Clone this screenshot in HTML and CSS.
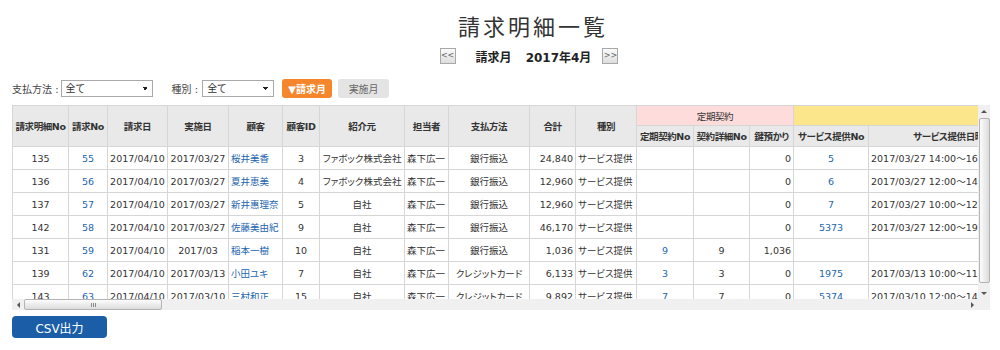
FILE: index.html
```html
<!DOCTYPE html>
<html lang="ja">
<head>
    <meta charset="UTF-8">
    <meta name="viewport" content="width=device-width, initial-scale=1.0">
    <title>請求明細一覧</title>
    <link rel="stylesheet" href="styles.css">
</head>
<body>
    <div class="page">
        <h1 class="page-title">請求明細一覧</h1>

        <div class="month-nav">
            <button class="nav-btn">&lt;&lt;</button>
            <span class="nav-label">請求月</span>
            <span class="nav-month">2017年4月</span>
            <button class="nav-btn next">&gt;&gt;</button>
        </div>

        <div class="filters">
            <label class="filter-label">支払方法 :</label>
            <select class="filter-select pay"><option>全て</option></select>
            <label class="filter-label kind-label">種別 :</label>
            <select class="filter-select kind"><option>全て</option></select>
            <button class="btn btn-active">▼請求月</button>
            <button class="btn">実施月</button>
        </div>

        <div class="grid-frame">
            <div class="grid">
                <table>
                    <colgroup>
                        <col class="w56"><col class="w39"><col class="w60"><col class="w61">
                        <col class="w54"><col class="w37"><col class="w85"><col class="w44">
                        <col class="w81"><col class="w46"><col class="w61"><col class="w57">
                        <col class="w56"><col class="w44"><col class="w75"><col class="w160">
                        <col class="w110"><col class="w50"><col class="w60"><col class="w70">
                        <col class="w60"><col>
                    </colgroup>
                    <thead>
                        <tr class="head-top">
                            <th rowspan="2">請求明細No</th>
                            <th rowspan="2">請求No</th>
                            <th rowspan="2">請求日</th>
                            <th rowspan="2">実施日</th>
                            <th rowspan="2">顧客</th>
                            <th rowspan="2">顧客ID</th>
                            <th rowspan="2">紹介元</th>
                            <th rowspan="2">担当者</th>
                            <th rowspan="2">支払方法</th>
                            <th rowspan="2">合計</th>
                            <th rowspan="2">種別</th>
                            <th colspan="3" class="group-contract">定期契約</th>
                            <th colspan="6" class="group-service">サービス提供</th>
                            <th rowspan="2">交通費</th>
                            <th rowspan="2">備考</th>
                        </tr>
                        <tr class="head-sub">
                            <th>定期契約No</th>
                            <th>契約詳細No</th>
                            <th>鍵預かり</th>
                            <th>サービス提供No</th>
                            <th>サービス提供日時</th>
                            <th>サービス内容</th>
                            <th>時間</th>
                            <th>単価</th>
                            <th>金額</th>
                        </tr>
                    </thead>
                    <tbody>
                        <tr>
                            <td class="c">135</td>
                            <td class="c"><a href="#">55</a></td>
                            <td class="c">2017/04/10</td>
                            <td class="c">2017/03/27</td>
                            <td><a href="#">桜井美香</a></td>
                            <td class="c">3</td>
                            <td class="c">ファボック株式会社</td>
                            <td>森下広一</td>
                            <td class="c">銀行振込</td>
                            <td class="r">24,840</td>
                            <td>サービス提供</td>
                            <td></td>
                            <td></td>
                            <td class="r">0</td>
                            <td class="c"><a href="#">5</a></td>
                            <td>2017/03/27 14:00～16:00</td>
                            <td>家事代行</td>
                            <td class="r">2.0</td>
                            <td class="r">11,500</td>
                            <td class="r">23,000</td>
                            <td class="r">0</td>
                            <td></td>
                        </tr>
                        <tr>
                            <td class="c">136</td>
                            <td class="c"><a href="#">56</a></td>
                            <td class="c">2017/04/10</td>
                            <td class="c">2017/03/27</td>
                            <td><a href="#">夏井恵美</a></td>
                            <td class="c">4</td>
                            <td class="c">ファボック株式会社</td>
                            <td>森下広一</td>
                            <td class="c">銀行振込</td>
                            <td class="r">12,960</td>
                            <td>サービス提供</td>
                            <td></td>
                            <td></td>
                            <td class="r">0</td>
                            <td class="c"><a href="#">6</a></td>
                            <td>2017/03/27 12:00～14:00</td>
                            <td>家事代行</td>
                            <td class="r">2.0</td>
                            <td class="r">6,000</td>
                            <td class="r">12,000</td>
                            <td class="r">0</td>
                            <td></td>
                        </tr>
                        <tr>
                            <td class="c">137</td>
                            <td class="c"><a href="#">57</a></td>
                            <td class="c">2017/04/10</td>
                            <td class="c">2017/03/27</td>
                            <td><a href="#">新井惠理奈</a></td>
                            <td class="c">5</td>
                            <td class="c">自社</td>
                            <td>森下広一</td>
                            <td class="c">銀行振込</td>
                            <td class="r">12,960</td>
                            <td>サービス提供</td>
                            <td></td>
                            <td></td>
                            <td class="r">0</td>
                            <td class="c"><a href="#">7</a></td>
                            <td>2017/03/27 10:00～12:00</td>
                            <td>家事代行</td>
                            <td class="r">2.0</td>
                            <td class="r">6,000</td>
                            <td class="r">12,000</td>
                            <td class="r">0</td>
                            <td></td>
                        </tr>
                        <tr>
                            <td class="c">142</td>
                            <td class="c"><a href="#">58</a></td>
                            <td class="c">2017/04/10</td>
                            <td class="c">2017/03/27</td>
                            <td><a href="#">佐藤美由紀</a></td>
                            <td class="c">9</td>
                            <td class="c">自社</td>
                            <td>森下広一</td>
                            <td class="c">銀行振込</td>
                            <td class="r">46,170</td>
                            <td>サービス提供</td>
                            <td></td>
                            <td></td>
                            <td class="r">0</td>
                            <td class="c"><a href="#">5373</a></td>
                            <td>2017/03/27 12:00～19:00</td>
                            <td>家事代行</td>
                            <td class="r">7.0</td>
                            <td class="r">6,100</td>
                            <td class="r">42,700</td>
                            <td class="r">0</td>
                            <td></td>
                        </tr>
                        <tr>
                            <td class="c">131</td>
                            <td class="c"><a href="#">59</a></td>
                            <td class="c">2017/04/10</td>
                            <td class="c">2017/03</td>
                            <td><a href="#">稲本一樹</a></td>
                            <td class="c">10</td>
                            <td class="c">自社</td>
                            <td>森下広一</td>
                            <td class="c">銀行振込</td>
                            <td class="r">1,036</td>
                            <td>サービス提供</td>
                            <td class="c"><a href="#">9</a></td>
                            <td class="c">9</td>
                            <td class="r">1,036</td>
                            <td></td>
                            <td></td>
                            <td></td>
                            <td></td>
                            <td></td>
                            <td></td>
                            <td></td>
                            <td></td>
                        </tr>
                        <tr>
                            <td class="c">139</td>
                            <td class="c"><a href="#">62</a></td>
                            <td class="c">2017/04/10</td>
                            <td class="c">2017/03/13</td>
                            <td><a href="#">小田ユキ</a></td>
                            <td class="c">7</td>
                            <td class="c">自社</td>
                            <td>森下広一</td>
                            <td class="c">クレジットカード</td>
                            <td class="r">6,133</td>
                            <td>サービス提供</td>
                            <td class="c"><a href="#">3</a></td>
                            <td class="c">3</td>
                            <td class="r">0</td>
                            <td class="c"><a href="#">1975</a></td>
                            <td>2017/03/13 10:00～11:00</td>
                            <td>家事代行</td>
                            <td class="r">1.0</td>
                            <td class="r">5,680</td>
                            <td class="r">5,680</td>
                            <td class="r">0</td>
                            <td></td>
                        </tr>
                        <tr>
                            <td class="c">143</td>
                            <td class="c"><a href="#">63</a></td>
                            <td class="c">2017/04/10</td>
                            <td class="c">2017/03/10</td>
                            <td><a href="#">三村和正</a></td>
                            <td class="c">15</td>
                            <td class="c">自社</td>
                            <td>森下広一</td>
                            <td class="c">クレジットカード</td>
                            <td class="r">9,892</td>
                            <td>サービス提供</td>
                            <td class="c"><a href="#">7</a></td>
                            <td class="c">7</td>
                            <td class="r">0</td>
                            <td class="c"><a href="#">5374</a></td>
                            <td>2017/03/10 12:00～14:00</td>
                            <td>家事代行</td>
                            <td class="r">2.0</td>
                            <td class="r">4,580</td>
                            <td class="r">9,160</td>
                            <td class="r">0</td>
                            <td></td>
                        </tr>
                    </tbody>
                </table>
            </div>

            <!-- スクロールバー -->
            <div class="vscroll">
                <span class="sb-btn"><span class="arrow up"></span></span>
                <span class="sb-track"><span class="sb-thumb"></span></span>
                <span class="sb-btn"><span class="arrow down"></span></span>
            </div>
            <div class="hscroll">
                <span class="sb-btn"><span class="arrow left"></span></span>
                <span class="sb-track"><span class="sb-thumb"></span></span>
                <span class="sb-btn"><span class="arrow right"></span></span>
            </div>
            <div class="sb-corner"></div>
        </div>

        <button class="btn-csv">CSV出力</button>
    </div>
</body>
</html>
```

FILE: styles.css
```css
body {
    margin: 0;
    font-family: "DejaVu Sans", "Noto Sans CJK JP", sans-serif;
    font-feature-settings: "palt";
    font-size: 9.5px;
    color: #333;
}

button,
select {
    font-family: inherit;
    font-feature-settings: inherit;
}

.page {
    padding: 0 10px 0 12px;
}

/* タイトル */
.page-title {
    margin: 10px 0 0;
    padding-left: 64px;
    text-align: center;
    font-family: "Noto Sans CJK JP", sans-serif;
    font-size: 22px;
    font-weight: normal;
    line-height: 30px;
    letter-spacing: 3px;
}

.month-nav {
    display: flex;
    justify-content: center;
    align-items: center;
    height: 16px;
    margin-top: 8px;
    padding-left: 56px;
    font-size: 12px;
    font-weight: bold;
    color: #222;
}

.nav-btn {
    width: 16px;
    height: 16px;
    padding: 0;
    border: 1px solid #a8a8a8;
    background: linear-gradient(#fbfbfb, #dedede);
    color: #666;
    font-size: 8px;
    font-weight: normal;
    line-height: 14px;
}

.nav-label {
    margin-left: 20px;
}

.nav-month {
    margin-left: 14px;
}

.nav-btn.next {
    margin-left: 11px;
}

/* 絞り込み */
.filters {
    display: flex;
    align-items: center;
    height: 19px;
    margin-top: 15px;
    font-size: 10px;
}

.filter-label {
    color: #444;
}

.kind-label {
    margin-left: 19px;
}

.filter-select {
    appearance: none;
    height: 17px;
    margin-left: 2px;
    padding: 0 4px;
    border: 1px solid #a9a9a9;
    border-radius: 0;
    font-size: 10px;
    color: #333;
    background-color: #fff;
    background-image: linear-gradient(45deg, transparent 50%, #222 50%), linear-gradient(135deg, #222 50%, transparent 50%);
    background-position: right 7px center, right 4px center;
    background-size: 3px 3px;
    background-repeat: no-repeat;
}

.filter-select.pay {
    width: 92px;
}

.filter-select.kind {
    width: 72px;
    margin-left: 4px;
    margin-right: 8px;
}

.btn {
    width: 51px;
    height: 19px;
    margin-right: 6px;
    padding: 0;
    border: 0;
    border-radius: 3px;
    background: #e4e4e4;
    color: #666;
    font-size: 10px;
}

.btn-active {
    width: 50px;
    background: #f5862c;
    color: #fff;
    font-weight: bold;
}

/* 一覧 */
.grid-frame {
    display: grid;
    grid-template-columns: 966px 12px;
    grid-template-rows: 194px 11px;
    margin-top: 7px;
    width: 978px;
}

.grid {
    overflow: hidden;
    background: #fff;
}

.grid table {
    width: 6560px;
    table-layout: fixed;
    border-collapse: collapse;
}

.grid th,
.grid td {
    padding: 0 2px;
    border: 1px solid #d6d6d6;
    white-space: nowrap;
    overflow: hidden;
}

.grid th {
    background: #e9e9e9;
    font-weight: bold;
    letter-spacing: -0.4px;
    color: #333;
}

.head-top {
    height: 20px;
}

.head-sub {
    height: 21px;
}

.grid th.group-contract {
    background: #fedcdc;
    font-weight: normal;
}

.grid th.group-service {
    background: #fce68b;
    font-weight: normal;
}

.grid tbody tr {
    height: 23px;
}

.grid td.c {
    text-align: center;
}

.grid td.r {
    text-align: right;
}

.grid a {
    color: #2465ae;
    text-decoration: none;
}

.w37 { width: 37px; }
.w39 { width: 39px; }
.w44 { width: 44px; }
.w46 { width: 46px; }
.w50 { width: 50px; }
.w54 { width: 54px; }
.w56 { width: 56px; }
.w57 { width: 57px; }
.w60 { width: 60px; }
.w61 { width: 61px; }
.w70 { width: 70px; }
.w75 { width: 75px; }
.w81 { width: 81px; }
.w85 { width: 85px; }
.w110 { width: 110px; }
.w160 { width: 160px; }

/* スクロールバー */
.vscroll,
.hscroll,
.sb-corner {
    display: flex;
    background: #f0f0f0;
}

.vscroll {
    flex-direction: column;
}

.sb-btn {
    display: flex;
    justify-content: center;
    align-items: center;
    flex: 0 0 12px;
    height: 12px;
}

.hscroll .sb-btn {
    height: 11px;
}

.sb-track {
    display: flex;
    flex: 1;
}

.vscroll .sb-track {
    flex-direction: column;
    padding-top: 1px;
}

.sb-thumb {
    box-sizing: border-box;
    border: 1px solid #b3b3b3;
    border-radius: 2px;
}

.vscroll .sb-thumb {
    width: 11px;
    height: 165px;
    margin-left: 1px;
    background: linear-gradient(90deg, #fcfcfc, #dcdcdc);
}

.hscroll .sb-thumb {
    width: 138px;
    height: 11px;
    background: repeating-linear-gradient(90deg, #8a8a8a 0 1px, transparent 1px 2px) center / 5px 4px no-repeat, linear-gradient(#fcfcfc, #dcdcdc);
}

.arrow {
    width: 0;
    height: 0;
    border: 3px solid transparent;
}

.arrow.up {
    border-top: 0;
    border-bottom-color: #555;
}

.arrow.down {
    border-bottom: 0;
    border-top-color: #555;
}

.arrow.left {
    border-left: 0;
    border-right-color: #555;
}

.arrow.right {
    border-right: 0;
    border-left-color: #555;
}

.btn-csv {
    display: block;
    width: 95px;
    height: 22px;
    margin-top: 6px;
    padding: 0;
    border: 0;
    border-radius: 4px;
    background: #1b5ea7;
    color: #fff;
    font-size: 12px;
}
```
